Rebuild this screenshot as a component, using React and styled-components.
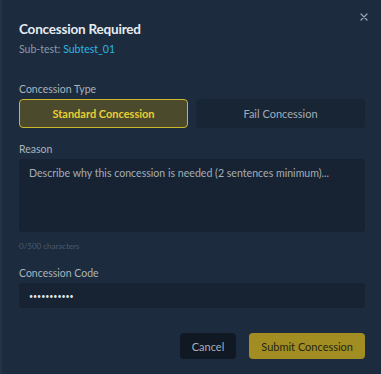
import React from "react";
import styled, { createGlobalStyle } from "styled-components";

const GlobalStyle = createGlobalStyle`
  html, body {
    margin: 0;
    padding: 0;
    background: #1b2a3c;
  }
  * {
    box-sizing: border-box;
  }
`;

const Modal = styled.div`
  position: relative;
  width: 381px;
  height: 374px;
  padding: 19px 16px 0 17px;
  background: #1c2b3d;
  border-left: 2px solid #223346;
  font-family: Lato, "Noto Sans", sans-serif;
  color: #c8d2dc;
`;

const CloseButton = styled.button`
  position: absolute;
  top: 10px;
  right: 10px;
  width: 14px;
  height: 14px;
  padding: 0;
  border: none;
  background: none;
  cursor: pointer;
  display: flex;
  align-items: center;
  justify-content: center;
`;

const Title = styled.h2`
  margin: 0;
  font-size: 13.5px;
  font-weight: 700;
  color: #e6ecf2;
  line-height: 20px;
  letter-spacing: -0.2px;
`;

const SubTitle = styled.div`
  margin-top: 3px;
  font-size: 10.5px;
  line-height: 15px;
  color: #8d9aa8;
  span {
    color: #2cb6e3;
  }
`;

const Field = styled.div`
  margin-top: ${(p) => p.$top || 0}px;
  display: flex;
  flex-direction: column;
`;

const Label = styled.label`
  font-size: 10.5px;
  line-height: 15px;
  color: #a9b4bf;
  margin-bottom: 2px;
`;

const ToggleRow = styled.div`
  display: grid;
  grid-template-columns: 1fr 1fr;
  gap: 8px;
`;

const Toggle = styled.button`
  height: 29px;
  border-radius: 4px;
  font-family: inherit;
  font-size: 11px;
  cursor: pointer;
  border: 1px solid ${(p) => (p.$active ? "#cdb52c" : "transparent")};
  background: ${(p) => (p.$active ? "#4b4a2c" : "#182535")};
  color: ${(p) => (p.$active ? "#e8cf34" : "#a2adb8")};
  font-weight: ${(p) => (p.$active ? 700 : 400)};
`;

const TextArea = styled.textarea`
  height: 73px;
  resize: none;
  border: none;
  border-radius: 4px;
  background: #172332;
  padding: 8px 10px;
  font-family: inherit;
  font-size: 10.6px;
  color: #c8d2dc;
  outline: none;
  &::placeholder {
    color: #a3aeb9;
  }
`;

const Counter = styled.div`
  margin-top: 9px;
  font-size: 8px;
  line-height: 11px;
  color: #4b5b6c;
`;

const Input = styled.input`
  height: 25px;
  border: none;
  border-radius: 4px;
  background: #172332;
  padding: 0 10px;
  font-family: inherit;
  font-size: 7px;
  color: #dde4ea;
  outline: none;
`;

const Footer = styled.div`
  display: flex;
  justify-content: flex-end;
  gap: 13px;
  margin-top: 25px;
`;

const Button = styled.button`
  height: 26px;
  padding: 0 12px;
  border-radius: 4px;
  border: none;
  font-family: inherit;
  font-size: 11px;
  cursor: pointer;
  background: ${(p) => (p.$primary ? "#a28d22" : "#0f1823")};
  color: ${(p) => (p.$primary ? "#262515" : "#a6b0bb")};
`;

export default function App() {
  return (
    <>
      <GlobalStyle />
      <Modal>
        <CloseButton aria-label="Close">
          <svg width="8" height="8" viewBox="0 0 8 8">
            <path d="M1 1L7 7M7 1L1 7" stroke="#93a4b8" strokeWidth="1.3" strokeLinecap="round" />
          </svg>
        </CloseButton>
        <Title>Concession Required</Title>
        <SubTitle>
          Sub-test: <span>Subtest_01</span>
        </SubTitle>

        <Field $top={25}>
          <Label>Concession Type</Label>
          <ToggleRow>
            <Toggle $active>Standard Concession</Toggle>
            <Toggle>Fail Concession</Toggle>
          </ToggleRow>
        </Field>

        <Field $top={14}>
          <Label>Reason</Label>
          <TextArea placeholder="Describe why this concession is needed (2 sentences minimum)..." />
          <Counter>0/500 characters</Counter>
        </Field>

        <Field $top={14}>
          <Label>Concession Code</Label>
          <Input type="password" defaultValue="CONC-123456" />
        </Field>

        <Footer>
          <Button>Cancel</Button>
          <Button $primary>Submit Concession</Button>
        </Footer>
      </Modal>
    </>
  );
}
